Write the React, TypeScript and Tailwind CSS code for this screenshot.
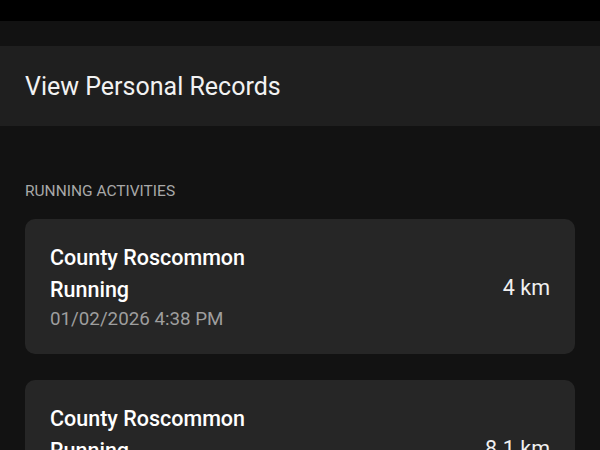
export default function App() {
  const cards = [
    { title: "County Roscommon Running", date: "01/02/2026 4:38 PM", dist: "4 km" },
    { title: "County Roscommon Running", date: "01/02/2026 4:38 PM", dist: "8.1 km" },
  ];
  return (
    <div className="w-[600px] h-[450px] overflow-hidden bg-[#121212] text-white" style={{ fontFamily: "Roboto, 'Noto Sans', sans-serif" }}>
      <div className="h-[21px] bg-black" />
      <div className="h-[25px]" />
      <div className="h-[80px] bg-[#1f1f1f] flex items-center px-[25px] pt-[2px]">
        <span className="text-[25px] text-[#f2f2f2]">View Personal Records</span>
      </div>
      <div className="px-[25px] pt-[54px]">
        <div className="text-[15.5px] text-[#a8a8a8] leading-[20px] pt-[1px]">RUNNING ACTIVITIES</div>
        <div className="mt-[18px] flex flex-col gap-[26px]">
          {cards.map((c, i) => (
            <div key={i} className="bg-[#262626] rounded-[10px] px-[25px] pt-[23px] pb-[21px] flex items-center justify-between">
              <div className="flex flex-col">
                <div className="text-[21.5px] font-medium leading-[32px] w-[240px]">{c.title}</div>
                <div className="text-[18.75px] leading-[27px] text-[#9e9e9e]">{c.date}</div>
              </div>
              <div className="text-[21.5px] text-[#f0f0f0] mt-[2px]">{c.dist}</div>
            </div>
          ))}
        </div>
      </div>
    </div>
  );
}
